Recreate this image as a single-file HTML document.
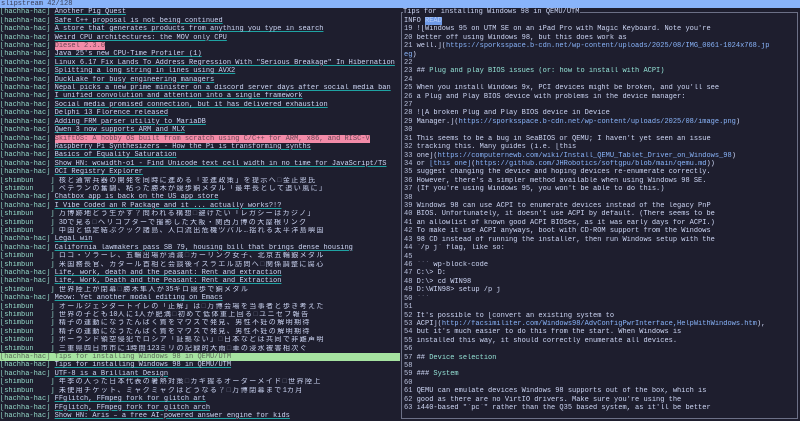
<!DOCTYPE html>
<html><head><meta charset="utf-8"><style>
*{margin:0;padding:0;box-sizing:border-box}
html,body{width:800px;height:421px;overflow:hidden;background:#1e1e2e}
body{font-family:"Liberation Mono","Noto Sans CJK JP",monospace;font-size:7px;color:#cdd6f4;position:relative}
.r{height:8.42px;line-height:8.42px;white-space:pre;overflow:hidden}
#top{position:absolute;left:0;top:0;width:800px;height:8px;background:#89b4fa;color:#3a3f58;line-height:8px;padding-left:1px;white-space:pre}
#left{position:absolute;left:0;top:8.42px;width:400px;overflow:hidden}
.t{color:#94d8c8}
.u{text-decoration:underline;text-decoration-color:#1fa3a3;text-decoration-thickness:1px;text-underline-offset:1px}
.pk{background:#f38ba8;color:#6a4654}
.g{background:#a6e3a1;color:#5a6a58;width:400px}
.g .t{color:#5a6a58}
.j{letter-spacing:1.4px}
.bx{color:#6c7086}
#box{position:absolute;left:401px;top:12px;width:397px;height:407px;border:1px solid #6c7086}
#ttl{position:absolute;left:403px;top:8.42px;background:#1e1e2e;padding-right:1px}
#right{position:absolute;left:404px;top:16.84px;width:392px;height:400px;overflow:hidden}
#right .r{position:absolute;left:0;width:392px}
.l{color:#89b4fa}
.h{color:#94e2d5}
.n{color:#bac2de}
.rd{background:#6f9ae8;color:#b4cdfa}
</style></head><body>
<div id="top">slipstream 42/128</div>
<div id="left">
<div class="r"><span class="t">[hachha-hac]</span> <span class="u">Another Pig Quest</span></div>
<div class="r"><span class="t">[hachha-hac]</span> <span class="u">Safe C++ proposal is not being continued</span></div>
<div class="r"><span class="t">[hachha-hac]</span> <span class="u">A store that generates products from anything you type in search</span></div>
<div class="r"><span class="t">[hachha-hac]</span> <span class="u">Weird CPU architectures: the MOV only CPU</span></div>
<div class="r"><span class="t">[hachha-hac]</span> <span class="pk">Diesel 2.3.0</span></div>
<div class="r"><span class="t">[hachha-hac]</span> <span class="u">Java 25's new CPU-Time Profiler (1)</span></div>
<div class="r"><span class="t">[hachha-hac]</span> <span class="u">Linux 6.17 Fix Lands To Address Regression With "Serious Breakage" In Hibernation</span></div>
<div class="r"><span class="t">[hachha-hac]</span> <span class="u">Splitting a long string in lines using AVX2</span></div>
<div class="r"><span class="t">[hachha-hac]</span> <span class="u">DuckLake for busy engineering managers</span></div>
<div class="r"><span class="t">[hachha-hac]</span> <span class="u">Nepal picks a new prime minister on a discord server days after social media ban</span></div>
<div class="r"><span class="t">[hachha-hac]</span> <span class="u">I unified convolution and attention into a single framework</span></div>
<div class="r"><span class="t">[hachha-hac]</span> <span class="u">Social media promised connection, but it has delivered exhaustion</span></div>
<div class="r"><span class="t">[hachha-hac]</span> <span class="u">Delphi 13 Florence released</span></div>
<div class="r"><span class="t">[hachha-hac]</span> <span class="u">Adding FRM parser utility to MariaDB</span></div>
<div class="r"><span class="t">[hachha-hac]</span> <span class="u">Qwen 3 now supports ARM and MLX</span></div>
<div class="r"><span class="t">[hachha-hac]</span> <span class="pk">SkiftOS: A hobby OS built from scratch using C/C++ for ARM, x86, and RISC-V</span></div>
<div class="r"><span class="t">[hachha-hac]</span> <span class="u">Raspberry Pi Synthesizers - How the Pi is transforming synths</span></div>
<div class="r"><span class="t">[hachha-hac]</span> <span class="u">Basics of Equality Saturation</span></div>
<div class="r"><span class="t">[hachha-hac]</span> <span class="u">Show HN: wcwidth-o1 - Find Unicode text cell width in no time for JavaScript/TS</span></div>
<div class="r"><span class="t">[hachha-hac]</span> <span class="u">OCI Registry Explorer</span></div>
<div class="r"><span class="t">[shimbun    ]</span> <span class="j">核と通常兵器の開発を同時に進める「並進政策」を提示へ<span class="bx">□</span>金正恩氏</span></div>
<div class="r"><span class="t">[shimbun    ]</span> <span class="j">ベテランの奮闘、粘った勝木が競歩銅メダル「最年長として追い風に」</span></div>
<div class="r"><span class="t">[hachha-hac]</span> <span class="u">Chatbox app is back on the US app store</span></div>
<div class="r"><span class="t">[hachha-hac]</span> <span class="u">I Vibe Coded an R Package and it ... actually works?!?</span></div>
<div class="r"><span class="t">[shimbun    ]</span> <span class="j">万博跡地どう生かす？問われる構想<span class="bx">□</span>避けたい「レガシーはカジノ」</span></div>
<div class="r"><span class="t">[shimbun    ]</span> 3D<span class="j">で見る<span class="bx">□</span>ヘリコプターで撮影した大阪・関西万博の大屋根リング</span></div>
<div class="r"><span class="t">[shimbun    ]</span> <span class="j">中国と協定結ぶクック諸島、人口流出危機ツバル…揺れる太平洋島嶼国</span></div>
<div class="r"><span class="t">[hachha-hac]</span> <span class="u">Legal win</span></div>
<div class="r"><span class="t">[hachha-hac]</span> <span class="u">California lawmakers pass SB 79, housing bill that brings dense housing</span></div>
<div class="r"><span class="t">[shimbun    ]</span> <span class="j">ロコ・ソラーレ、五輪出場が消滅<span class="bx">□</span>カーリング女子、北京五輪銀メダル</span></div>
<div class="r"><span class="t">[shimbun    ]</span> <span class="j">米国務長官、カタール首相と会談後イスラエル訪問へ<span class="bx">□</span>関係調整に腐心</span></div>
<div class="r"><span class="t">[hachha-hac]</span> <span class="u">Life, work, death and the peasant: Rent and extraction</span></div>
<div class="r"><span class="t">[hachha-hac]</span> <span class="u">Life, Work, Death and the Peasant: Rent and Extraction</span></div>
<div class="r"><span class="t">[shimbun    ]</span> <span class="j">世界陸上が閉幕<span class="bx">□</span>勝木隼人が</span>35<span class="j">キロ競歩で銅メダル</span></div>
<div class="r"><span class="t">[hachha-hac]</span> <span class="u">Meow: Yet another modal editing on Emacs</span></div>
<div class="r"><span class="t">[shimbun    ]</span> <span class="j">オールジェンダートイレの「正解」は<span class="bx">□</span>万博会場を当事者と歩き考えた</span></div>
<div class="r"><span class="t">[shimbun    ]</span> <span class="j">世界の子ども</span>10<span class="j">人に</span>1<span class="j">人が肥満<span class="bx">□</span>初めて低体重上回る<span class="bx">□</span>ユニセフ報告</span></div>
<div class="r"><span class="t">[shimbun    ]</span> <span class="j">精子の運動になうたんぱく質をマウスで発見、男性不妊の解明期待</span></div>
<div class="r"><span class="t">[shimbun    ]</span> <span class="j">精子の運動になうたんぱく質をマウスで発見、男性不妊の解明期待</span></div>
<div class="r"><span class="t">[shimbun    ]</span> <span class="j">ポーランド領空侵犯でロシア「証拠ない」<span class="bx">□</span>日本などは共同で非難声明</span></div>
<div class="r"><span class="t">[shimbun    ]</span> <span class="j">三重県四日市市に</span>1<span class="j">時間</span>123<span class="j">ミリの記録的大雨<span class="bx">□</span>車の浸水被害相次ぐ</span></div>
<div class="r g"><span class="t">[hachha-hac]</span> Tips for installing Windows 98 in QEMU/UTM</div>
<div class="r"><span class="t">[hachha-hac]</span> <span class="u">Tips for installing Windows 98 in QEMU/UTM</span></div>
<div class="r"><span class="t">[hachha-hac]</span> <span class="u">UTF-8 is a Brilliant Design</span></div>
<div class="r"><span class="t">[shimbun    ]</span> <span class="j">年季の入った日本代表の暑熱対策<span class="bx">□</span>カギ握るオーダーメイド<span class="bx">□</span>世界陸上</span></div>
<div class="r"><span class="t">[shimbun    ]</span> <span class="j">未使用チケット、ミャクミャクはどうなる？<span class="bx">□</span>万博閉幕まで</span>1<span class="j">カ月</span></div>
<div class="r"><span class="t">[hachha-hac]</span> <span class="u">FFglitch, FFmpeg fork for glitch art</span></div>
<div class="r"><span class="t">[hachha-hac]</span> <span class="u">FFglitch, FFmpeg fork for glitch arch</span></div>
<div class="r"><span class="t">[hachha-hac]</span> <span class="u">Show HN: Aris – a free AI-powered answer engine for kids</span></div>
</div>
<div id="box"></div>
<div id="ttl" class="r">Tips for installing Windows 98 in QEMU/UTM</div>
<div id="right">
<div class="r" style="top:0px">INFO <span class="rd">READ</span></div>
<div class="r" style="top:8.42px"><span class="n">19</span> ![Windows 95 on UTM SE on an iPad Pro with Magic Keyboard. Note you're</div>
<div class="r" style="top:16.84px"><span class="n">20</span> better off using Windows 98, but this does work as</div>
<div class="r" style="top:25.26px"><span class="n">21</span> well.](<span class="l">https://sporksspace.b-cdn.net/wp-content/uploads/2025/08/IMG_0061-1024x768.jp</span></div>
<div class="r" style="top:33.68px"><span class="l">eg</span>)</div>
<div class="r" style="top:42.1px"><span class="n">22</span></div>
<div class="r" style="top:50.52px"><span class="n">23</span> ## <span class="h">Plug and play BIOS issues (or: how to install with ACPI)</span></div>
<div class="r" style="top:58.94px"><span class="n">24</span></div>
<div class="r" style="top:67.36px"><span class="n">25</span> When you install Windows 9x, PCI devices might be broken, and you'll see</div>
<div class="r" style="top:75.78px"><span class="n">26</span> a Plug and Play BIOS device with problems in the device manager:</div>
<div class="r" style="top:84.2px"><span class="n">27</span></div>
<div class="r" style="top:92.62px"><span class="n">28</span> ![A broken Plug and Play BIOS device in Device</div>
<div class="r" style="top:101.04px"><span class="n">29</span> Manager.](<span class="l">https://sporksspace.b-cdn.net/wp-content/uploads/2025/08/image.png</span>)</div>
<div class="r" style="top:109.46px"><span class="n">30</span></div>
<div class="r" style="top:117.88px"><span class="n">31</span> This seems to be a bug in SeaBIOS or QEMU; I haven't yet seen an issue</div>
<div class="r" style="top:126.3px"><span class="n">32</span> tracking this. Many guides (i.e. [this</div>
<div class="r" style="top:134.72px"><span class="n">33</span> one](<span class="l">https://computernewb.com/wiki/Install_QEMU_Tablet_Driver_on_Windows_98</span>)</div>
<div class="r" style="top:143.14px"><span class="n">34</span> or <span class="l">[this one]</span>(<span class="l">https://github.com/JHRobotics/softgpu/blob/main/qemu.md</span>))</div>
<div class="r" style="top:151.56px"><span class="n">35</span> suggest changing the device and hoping devices re-enumerate correctly.</div>
<div class="r" style="top:159.98px"><span class="n">36</span> However, there's a simpler method available when using Windows 98 SE.</div>
<div class="r" style="top:168.4px"><span class="n">37</span> (If you're using Windows 95, you won't be able to do this.)</div>
<div class="r" style="top:176.82px"><span class="n">38</span></div>
<div class="r" style="top:185.24px"><span class="n">39</span> Windows 98 can use ACPI to enumerate devices instead of the legacy PnP</div>
<div class="r" style="top:193.66px"><span class="n">40</span> BIOS. Unfortunately, it doesn't use ACPI by default. (There seems to be</div>
<div class="r" style="top:202.08px"><span class="n">41</span> an allowlist of known good ACPI BIOSes, as it was early days for ACPI.)</div>
<div class="r" style="top:210.5px"><span class="n">42</span> To make it use ACPI anyways, boot with CD-ROM support from the Windows</div>
<div class="r" style="top:218.92px"><span class="n">43</span> 98 CD instead of running the installer, then run Windows setup with the</div>
<div class="r" style="top:227.34px"><span class="n">44</span> &#96;/p j&#96; flag, like so:</div>
<div class="r" style="top:235.76px"><span class="n">45</span></div>
<div class="r" style="top:244.18px"><span class="n">46</span> &#96;&#96;&#96; wp-block-code</div>
<div class="r" style="top:252.6px"><span class="n">47</span> C:&#92;&gt; D:</div>
<div class="r" style="top:261.02px"><span class="n">48</span> D:&#92;&gt; cd WIN98</div>
<div class="r" style="top:269.44px"><span class="n">49</span> D:&#92;WIN98&gt; setup /p j</div>
<div class="r" style="top:277.86px"><span class="n">50</span> &#96;&#96;&#96;</div>
<div class="r" style="top:286.28px"><span class="n">51</span></div>
<div class="r" style="top:294.7px"><span class="n">52</span> It's possible to [convert an existing system to</div>
<div class="r" style="top:303.12px"><span class="n">53</span> ACPI](<span class="l">http://facsimiliter.com/Windows98/AdvConfigPwrInterface,HelpWithWindows.htm</span>),</div>
<div class="r" style="top:311.54px"><span class="n">54</span> but it's much easier to do this from the start. When Windows is</div>
<div class="r" style="top:319.96px"><span class="n">55</span> installed this way, it should correctly enumerate all devices.</div>
<div class="r" style="top:328.38px"><span class="n">56</span></div>
<div class="r" style="top:336.8px"><span class="n">57</span> ## <span class="h">Device selection</span></div>
<div class="r" style="top:345.22px"><span class="n">58</span></div>
<div class="r" style="top:353.64px"><span class="n">59</span> ### <span class="h">System</span></div>
<div class="r" style="top:362.06px"><span class="n">60</span></div>
<div class="r" style="top:370.48px"><span class="n">61</span> QEMU can emulate devices Windows 98 supports out of the box, which is</div>
<div class="r" style="top:378.9px"><span class="n">62</span> good as there are no VirtIO drivers. Make sure you're using the</div>
<div class="r" style="top:387.32px"><span class="n">63</span> i440-based "&#96;pc&#96;" rather than the Q35 based system, as it'll be better</div>
</div>
</body></html>
